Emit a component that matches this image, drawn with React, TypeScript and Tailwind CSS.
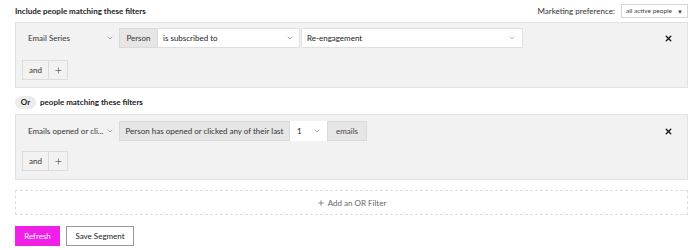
import { ChevronDown, Plus, X } from 'lucide-react'

const Chevron = () => <ChevronDown size={8} strokeWidth={1.5} className="text-[#666]" />

const AndButton = () => (
  <div className="flex h-[20px] w-[46px] border border-[#dcdcdc] bg-[#f2f2f2] text-[#333]">
    <div className="flex w-[26px] items-center justify-center border-r border-[#dcdcdc]">and</div>
    <div className="flex flex-1 items-center justify-center">
      <Plus size={9} strokeWidth={1.6} className="text-[#444]" />
    </div>
  </div>
)

export default function App() {
  return (
    <div className="h-[250px] w-[700px] bg-white font-['Lato',sans-serif] text-[8px] text-[#222]">
      {/* include header */}
      <div className="ml-[15px] flex h-[22px] w-[673px] items-center justify-between">
        <span className="font-bold">Include people matching these filters</span>
        <div className="flex items-center gap-[6px]">
          <span className="text-[#333]">Marketing preference:</span>
          <div className="flex h-[14px] w-[67px] items-center justify-between border border-[#d6d6d6] bg-white pl-[4px] pr-[4px] text-[6.5px] text-[#444]">
            <span>all active people</span>
            <span className="text-[6px]">▼</span>
          </div>
        </div>
      </div>

      {/* first panel */}
      <div className="ml-[15px] h-[66px] w-[673px] border border-[#e2e2e2] bg-[#f2f2f2] pl-[6px] pt-[5px]">
        <div className="flex h-[20px] items-stretch">
          <div className="flex w-[97px] items-center justify-between pl-[6px] pr-[5px] text-[#333]">
            <span>Email Series</span>
            <Chevron />
          </div>
          <div className="flex w-[39px] items-center justify-center border border-[#d9d9d9] bg-[#e6e6e6] text-[#333]">Person</div>
          <div className="flex w-[142px] items-center justify-between border border-l-0 border-[#e0e0e0] bg-white pl-[5px] pr-[5px]">
            <span>is subscribed to</span>
            <Chevron />
          </div>
          <div className="ml-[1px] flex w-[222px] items-center justify-between border border-[#e0e0e0] bg-white pl-[5px] pr-[6px]">
            <span>Re-engagement</span>
            <Chevron />
          </div>
          <div className="flex flex-1 items-center justify-end pr-[14px]">
            <X size={9} strokeWidth={3.5} className="text-[#111]" />
          </div>
        </div>
        <div className="mt-[12px]">
          <AndButton />
        </div>
      </div>

      {/* or header */}
      <div className="ml-[15px] flex h-[26px] items-center gap-[4px] pt-[2px]">
        <span className="flex h-[13px] w-[21px] items-center justify-center rounded-full bg-[#ececec] font-bold">Or</span>
        <span className="font-bold">people matching these filters</span>
      </div>

      {/* second panel */}
      <div className="ml-[15px] h-[66px] w-[673px] border border-[#e2e2e2] bg-[#f2f2f2] pl-[6px] pt-[6px]">
        <div className="flex h-[20px] items-stretch">
          <div className="flex w-[97px] items-center justify-between pl-[6px] pr-[5px] text-[#333]">
            <span>Emails opened or cli...</span>
            <Chevron />
          </div>
          <div className="flex w-[171px] items-center justify-center border border-[#d9d9d9] bg-[#e6e6e6] text-[#333]">
            Person has opened or clicked any of their last
          </div>
          <div className="flex w-[37px] items-center justify-between bg-white pl-[7px] pr-[6px]">
            <span>1</span>
            <Chevron />
          </div>
          <div className="flex w-[40px] items-center justify-center border border-[#d9d9d9] bg-[#e6e6e6] text-[#444]">emails</div>
          <div className="flex flex-1 items-center justify-end pr-[14px]">
            <X size={9} strokeWidth={3.5} className="text-[#111]" />
          </div>
        </div>
        <div className="mt-[10px]">
          <AndButton />
        </div>
      </div>

      {/* add or filter */}
      <div className="ml-[15px] mt-[10px] flex h-[25px] w-[673px] items-center justify-center gap-[3px] border border-dashed border-[#dedede] text-[#666]">
        <Plus size={8} strokeWidth={2.5} className="text-[#777]" />
        <span>Add an OR Filter</span>
      </div>

      {/* actions */}
      <div className="ml-[15px] mt-[11px] flex gap-[6px]">
        <button className="h-[20px] w-[45px] bg-[#f120e9] text-[8px] text-white">Refresh</button>
        <button className="h-[20px] w-[68px] border border-[#9a9a9a] bg-white text-[8px] text-[#222]">Save Segment</button>
      </div>
    </div>
  )
}
